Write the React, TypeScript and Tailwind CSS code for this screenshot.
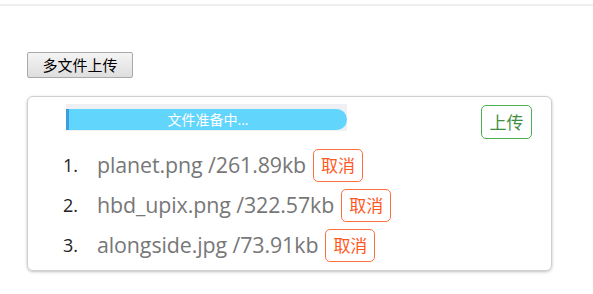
import React from "react";

const files = [
  { name: "planet.png", size: "261.89kb" },
  { name: "hbd_upix.png", size: "322.57kb" },
  { name: "alongside.jpg", size: "73.91kb" },
];

const font = { fontFamily: '"Open Sans", "Noto Sans CJK SC", sans-serif' };

export default function App() {
  return (
    <div className="w-[593px] h-[294px] bg-white" style={font}>
      <div className="h-[6px] border-b-2 border-[#eeeeee]" />
      <div className="pl-[27px] pt-[46px]">
        <button className="h-[26px] w-[106px] border border-[#a9a9a9] rounded-[2px] bg-gradient-to-b from-[#f4f4f4] to-[#dedede] text-[15px] leading-none text-black">
          多文件上传
        </button>
        <div className="mt-[18px] w-[525px] h-[175px] rounded-[6px] border border-[#cfcfcf] shadow-[0_1px_3px_rgba(0,0,0,0.25)] pl-[38px] pr-[19px] pt-[7px]">
          <div className="flex items-start justify-between">
            <div className="w-[281px] h-[27px] bg-[#eef0f3] pt-[5px]">
              <div className="h-[21px] w-full bg-[#62d5fc] rounded-r-full border-l-[3px] border-[#3a9fdc] flex items-center justify-center text-white text-[14px] leading-none">
                文件准备中...
              </div>
            </div>
            <button className="mt-[1px] h-[34px] w-[51px] rounded-[5px] border border-[#4caf50] text-[#3f8f3f] text-[17px] leading-none">
              上传
            </button>
          </div>
          <div className="mt-[6px] -ml-[3px] flex flex-col">
            {files.map((f, i) => (
              <div key={f.name} className="h-[40px] flex items-center">
                <span className="w-[34px] text-[18px] text-[#222]">{i + 1}.</span>
                <span className="text-[21.4px] text-[#777] tracking-[-0.1px]">
                  {f.name} /{f.size}
                </span>
                <button className="ml-[7px] h-[33px] w-[50px] rounded-[5px] border border-[#ff7043] text-[#ff5722] text-[17px] leading-none">
                  取消
                </button>
              </div>
            ))}
          </div>
        </div>
      </div>
    </div>
  );
}
